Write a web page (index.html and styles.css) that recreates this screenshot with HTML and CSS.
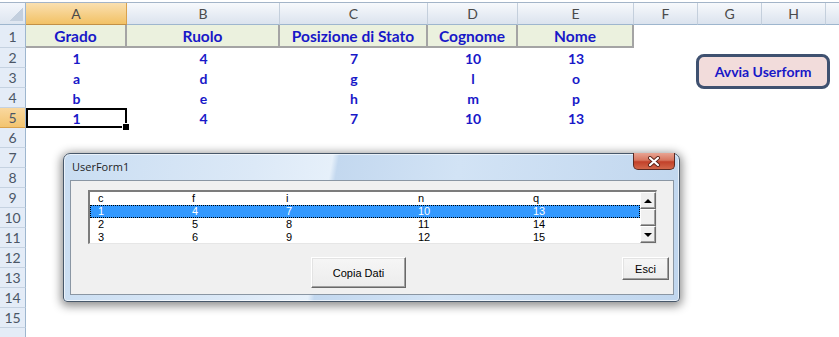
FILE: index.html
```html
<!DOCTYPE html>
<html lang="it">
<head>
    <meta charset="UTF-8">
    <meta name="viewport" content="width=device-width, initial-scale=1.0">
    <title>Avvia Userform</title>
    <link rel="stylesheet" href="styles.css">
</head>
<body>
    <!-- Foglio di lavoro -->
    <div class="foglio">
        <div class="riga intestazione">
            <div class="angolo"><span class="triangolo"></span></div>
            <div class="col-head attiva">A</div>
            <div class="col-head">B</div>
            <div class="col-head">C</div>
            <div class="col-head">D</div>
            <div class="col-head">E</div>
            <div class="col-head">F</div>
            <div class="col-head">G</div>
            <div class="col-head">H</div>
            <div class="col-head ultima"></div>
        </div>
        <div class="riga riga-titoli">
            <div class="row-head">1</div>
            <div class="cella titolo">Grado</div>
            <div class="cella titolo">Ruolo</div>
            <div class="cella titolo">Posizione di Stato</div>
            <div class="cella titolo">Cognome</div>
            <div class="cella titolo">Nome</div>
        </div>
        <div class="riga">
            <div class="row-head">2</div>
            <div class="cella">1</div>
            <div class="cella">4</div>
            <div class="cella">7</div>
            <div class="cella">10</div>
            <div class="cella">13</div>
        </div>
        <div class="riga">
            <div class="row-head">3</div>
            <div class="cella">a</div>
            <div class="cella">d</div>
            <div class="cella">g</div>
            <div class="cella">l</div>
            <div class="cella">o</div>
        </div>
        <div class="riga">
            <div class="row-head">4</div>
            <div class="cella">b</div>
            <div class="cella">e</div>
            <div class="cella">h</div>
            <div class="cella">m</div>
            <div class="cella">p</div>
        </div>
        <div class="riga">
            <div class="row-head attiva">5</div>
            <div class="cella selezionata">1</div>
            <div class="cella">4</div>
            <div class="cella">7</div>
            <div class="cella">10</div>
            <div class="cella">13</div>
        </div>
        <div class="riga"><div class="row-head">6</div></div>
        <div class="riga"><div class="row-head">7</div></div>
        <div class="riga"><div class="row-head">8</div></div>
        <div class="riga"><div class="row-head">9</div></div>
        <div class="riga"><div class="row-head">10</div></div>
        <div class="riga"><div class="row-head">11</div></div>
        <div class="riga"><div class="row-head">12</div></div>
        <div class="riga"><div class="row-head">13</div></div>
        <div class="riga"><div class="row-head">14</div></div>
        <div class="riga"><div class="row-head">15</div></div>
        <div class="riga"><div class="row-head"></div></div>
    </div>

    <!-- Pulsante (forma) sul foglio -->
    <button class="avvia">Avvia Userform</button>

    <!-- Finestra UserForm1 -->
    <div class="userform">
        <div class="barra-titolo">
            <span>UserForm1</span>
            <button class="chiudi" aria-label="Chiudi">
                <svg width="14" height="11" viewBox="0 0 14 11">
                    <path d="M3 2 L11 9 M11 2 L3 9" stroke="#5a2318" stroke-width="4" stroke-linecap="round"/>
                    <path d="M3 2 L11 9 M11 2 L3 9" stroke="#ffffff" stroke-width="2.2" stroke-linecap="round"/>
                </svg>
            </button>
        </div>
        <div class="area">
            <div class="listbox">
                <div class="elenco">
                    <div class="voce"><span>c</span><span>f</span><span>i</span><span>n</span><span>q</span></div>
                    <div class="voce scelta"><span>1</span><span>4</span><span>7</span><span>10</span><span>13</span></div>
                    <div class="voce"><span>2</span><span>5</span><span>8</span><span>11</span><span>14</span></div>
                    <div class="voce"><span>3</span><span>6</span><span>9</span><span>12</span><span>15</span></div>
                </div>
                <div class="scrollbar">
                    <div class="freccia su"></div>
                    <div class="cursore"></div>
                    <div class="freccia giu"></div>
                </div>
            </div>
            <div class="pulsanti">
                <button class="btn copia">Copia Dati</button>
                <button class="btn esci">Esci</button>
            </div>
        </div>
    </div>
</body>
</html>
```

FILE: styles.css
```css
/* Impostazioni generali */
* {
    box-sizing: border-box;
}
body {
    margin: 0;
    background: #fff;
    font-family: "Lato", "Liberation Sans", sans-serif;
    overflow: hidden;
}

/* Foglio di Excel */
.foglio {
    padding-top: 2px;
}
.riga {
    display: grid;
    grid-template-columns: 26px 101px 153px 148px 90px 116px 64px 64px 64px 1fr;
    height: 20px;
}
.intestazione {
    height: 23px;
    border-top: 1px solid #a3b4c8;
}
.riga-titoli {
    height: 23px;
}

/* Intestazioni di colonna */
.angolo {
    background: linear-gradient(#f3f6fb, #dde5f0);
    border-right: 1px solid #9eb6ce;
    border-bottom: 1px solid #9eb6ce;
    display: flex;
    align-items: flex-end;
    justify-content: flex-end;
    padding: 0 2px 3px 0;
}
.triangolo {
    width: 14px;
    height: 14px;
    background: linear-gradient(135deg, transparent 50%, #c3cfde 50%);
}
.col-head {
    background: linear-gradient(#f7f9fc, #dbe3ee);
    border-right: 1px solid #c4cfdc;
    border-bottom: 1px solid #9eb6ce;
    color: #4a4a4a;
    font-size: 14px;
    display: flex;
    align-items: center;
    justify-content: center;
}
.col-head.attiva {
    background: linear-gradient(#fae0b0, #f2c165);
    border-right-color: #d9a24d;
    border-bottom-color: #c29045;
}
.col-head.ultima {
    border-right: none;
}

/* Intestazioni di riga */
.row-head {
    background: #e4ecf7;
    border-right: 1px solid #9eb6ce;
    border-bottom: 1px solid #c5d2e1;
    color: #4b5666;
    font-size: 14px;
    display: flex;
    align-items: center;
    justify-content: center;
}
.row-head.attiva {
    background: linear-gradient(#f9d89f, #f3c46f);
    border-bottom-color: #d9a24d;
}

/* Celle */
.cella {
    color: #1818c8;
    font-weight: bold;
    font-size: 14px;
    display: flex;
    align-items: center;
    justify-content: center;
    position: relative;
}
.cella.titolo {
    background: #ebf1de;
    border-right: 2px solid #a4a4a4;
    border-bottom: 2px solid #a4a4a4;
    font-size: 15.5px;
    padding-top: 1px;
}
.cella.selezionata {
    box-shadow: inset 0 0 0 2px #000;
}
.cella.selezionata::after {
    content: "";
    position: absolute;
    right: -3px;
    bottom: -3px;
    width: 6px;
    height: 6px;
    background: #000;
    border: 1px solid #fff;
}

/* Pulsante forma sul foglio */
.avvia {
    position: absolute;
    left: 696px;
    top: 54px;
    width: 134px;
    height: 35px;
    background: #f2dcdb;
    border: 3px solid #3f5170;
    border-radius: 8px;
    color: #1818c8;
    font-family: "Lato", sans-serif;
    font-weight: bold;
    font-size: 14px;
    padding: 0;
}

/* Finestra UserForm */
.userform {
    position: absolute;
    left: 63px;
    top: 153px;
    width: 617px;
    height: 149px;
    border: 1px solid #48586a;
    border-radius: 7px 7px 4px 4px;
    background: linear-gradient(100deg, #c9ddf2 0%, #dce9f7 30%, #e6f0fa 42%, #c3d8ef 43%, #d2e3f5 62%, #c0d6ee 100%);
    box-shadow: 0 2px 10px 2px rgba(0, 0, 0, 0.45), inset 0 0 0 1px rgba(255, 255, 255, 0.6);
    padding: 0 5px 6px 6px;
    display: flex;
    flex-direction: column;
}
.barra-titolo {
    height: 26px;
    display: flex;
    justify-content: space-between;
    align-items: flex-start;
    font-family: "Open Sans", sans-serif;
    font-size: 11px;
    color: #1e1e1e;
}
.barra-titolo span {
    padding: 5px 0 0 2px;
}
.chiudi {
    width: 42px;
    height: 17px;
    margin: -1px -1px 0 0;
    padding: 0;
    border: 1px solid #5b2a22;
    border-top: none;
    border-radius: 0 0 5px 5px;
    background: linear-gradient(#e8a493 0%, #d7765f 45%, #c2412a 55%, #d2674a 100%);
    display: flex;
    align-items: center;
    justify-content: center;
}
.area {
    flex: 1;
    background: #f0f0f0;
    border: 1px solid #8a96a3;
    font-family: "Liberation Sans", Arial, sans-serif;
    font-size: 11px;
}

/* ListBox */
.listbox {
    margin: 9px 0 0 17px;
    width: 569px;
    height: 54px;
    background: #fff;
    border-style: solid;
    border-width: 2px 1px 1px 2px;
    border-color: #7c7c7c #e6e6e6 #e6e6e6 #7c7c7c;
    display: flex;
    overflow: hidden;
}
.elenco {
    flex: 1;
}
.voce {
    display: grid;
    grid-template-columns: 94px 94px 132px 115px 1fr;
    padding-left: 8px;
    height: 13px;
    line-height: 13px;
    color: #000;
}
.voce.scelta {
    background: #3399ff;
    color: #fff;
    outline: 1px dotted #000;
    outline-offset: -1px;
}
.scrollbar {
    width: 16px;
    display: flex;
    flex-direction: column;
    background: #f0f0f0;
}
.freccia, .cursore {
    background: #f0f0f0;
    border-style: solid;
    border-width: 1px;
    border-color: #fff #6b6b6b #6b6b6b #fff;
    box-shadow: inset -1px -1px #a0a0a0;
    display: flex;
    align-items: center;
    justify-content: center;
}
.freccia {
    height: 17px;
}
.cursore {
    flex: 1;
}
.freccia::before {
    content: "";
    border-left: 4px solid transparent;
    border-right: 4px solid transparent;
}
.freccia.su::before {
    border-bottom: 4px solid #000;
}
.freccia.giu::before {
    border-top: 4px solid #000;
}

/* Pulsanti del form */
.pulsanti {
    display: flex;
    align-items: flex-start;
    padding: 0 4px 0 240px;
    margin-top: 13px;
}
.btn {
    font-family: "Liberation Sans", Arial, sans-serif;
    font-size: 11px;
    color: #000;
    background: linear-gradient(#f6f6f6, #ececec);
    border-style: solid;
    border-width: 1px;
    border-color: #fff #696969 #696969 #fff;
    box-shadow: inset -1px -1px #a0a0a0, inset 1px 1px #e3e3e3;
    padding: 0;
}
.copia {
    width: 95px;
    height: 31px;
}
.esci {
    width: 47px;
    height: 23px;
    margin-left: auto;
}
```
